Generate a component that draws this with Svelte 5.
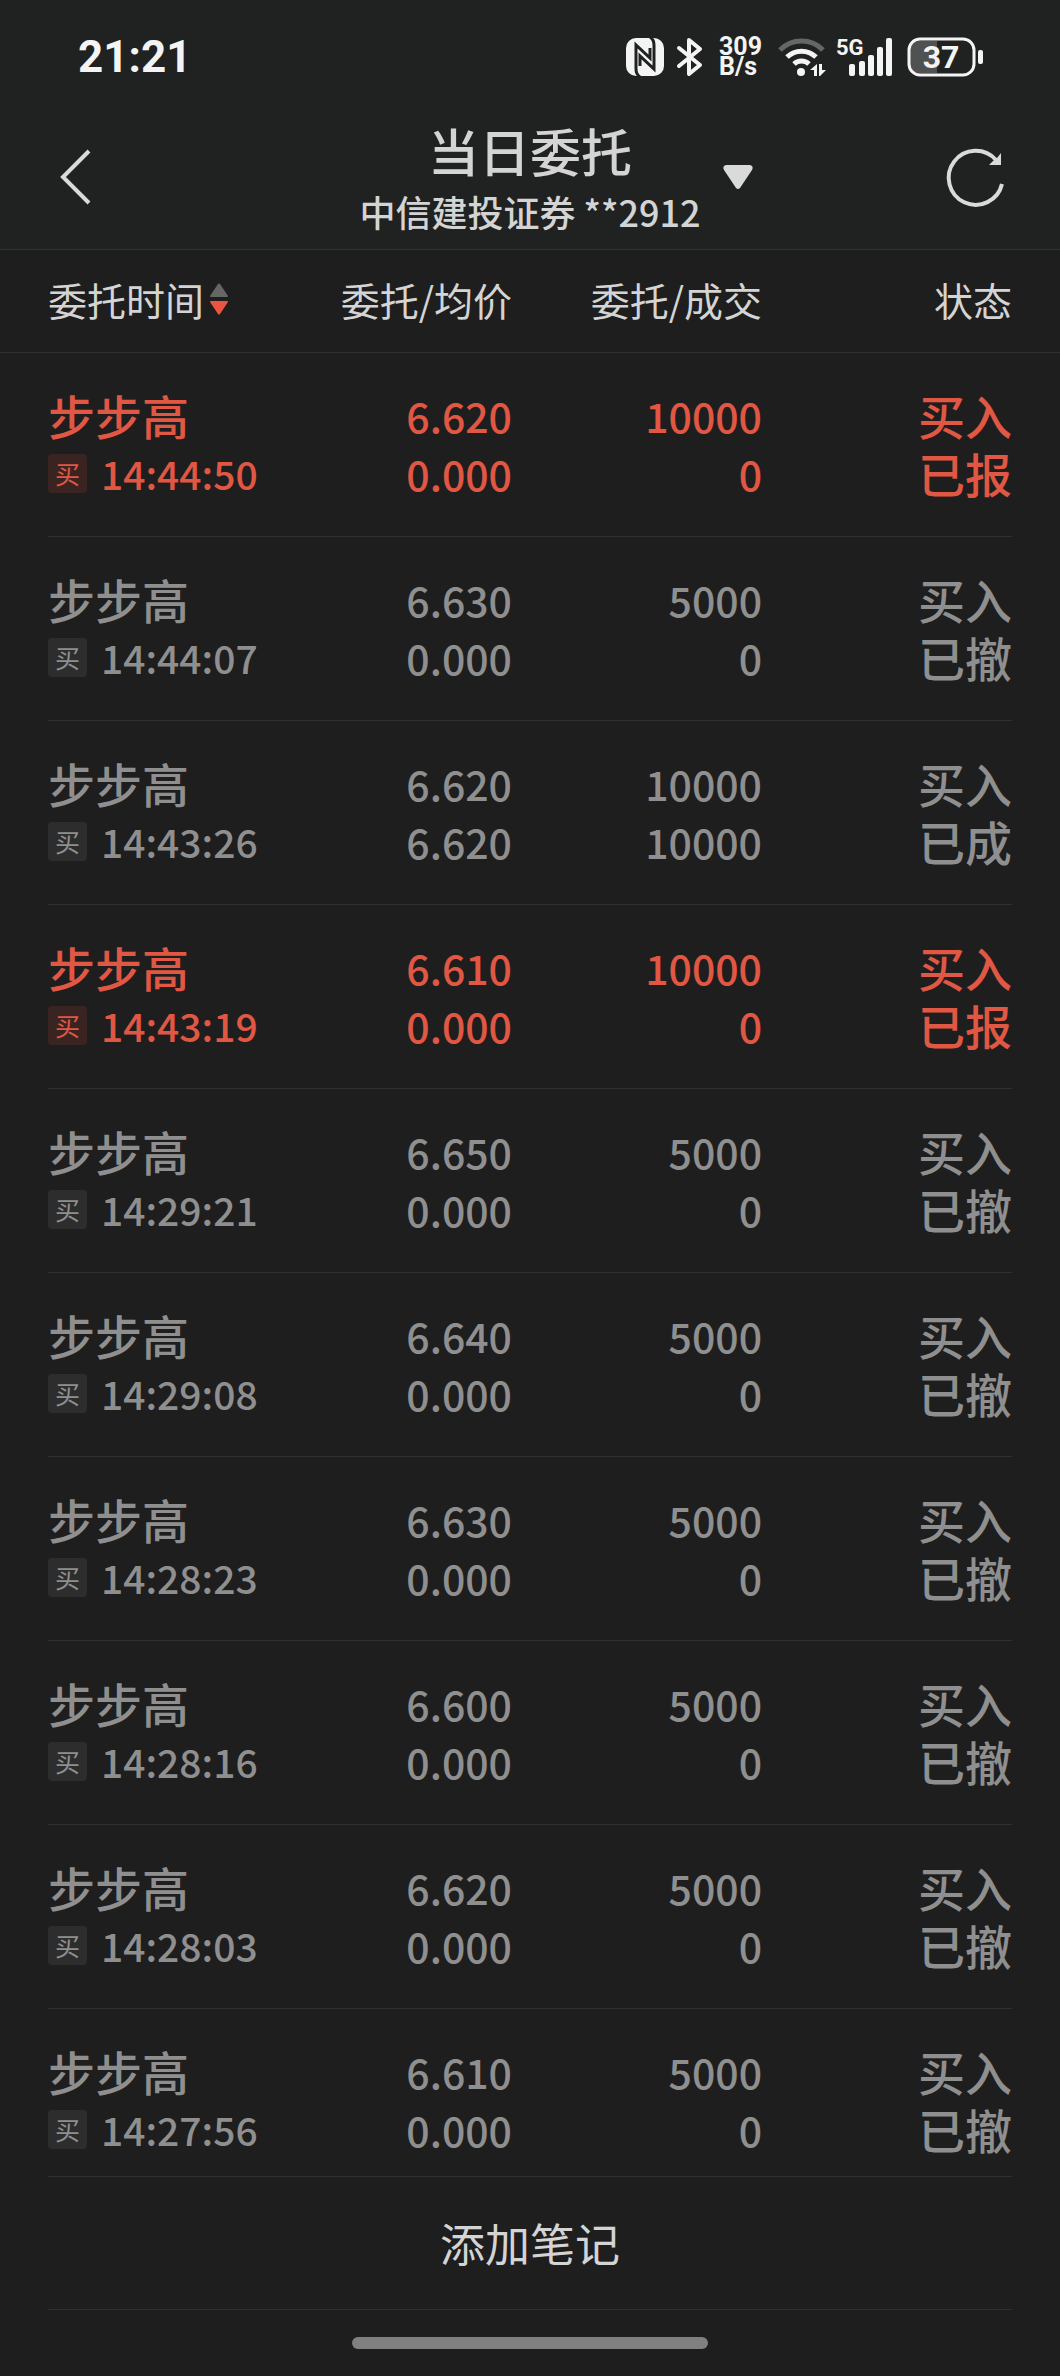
<script lang="ts">
    type Order = {
        name: string;
        time: string;
        price: string;
        avg: string;
        amount: number;
        dealt: number;
        status: string;
    };

    const orders: Order[] = [
        { name: '步步高', time: '14:44:50', price: '6.620', avg: '0.000', amount: 10000, dealt: 0, status: '已报' },
        { name: '步步高', time: '14:44:07', price: '6.630', avg: '0.000', amount: 5000, dealt: 0, status: '已撤' },
        { name: '步步高', time: '14:43:26', price: '6.620', avg: '6.620', amount: 10000, dealt: 10000, status: '已成' },
        { name: '步步高', time: '14:43:19', price: '6.610', avg: '0.000', amount: 10000, dealt: 0, status: '已报' },
        { name: '步步高', time: '14:29:21', price: '6.650', avg: '0.000', amount: 5000, dealt: 0, status: '已撤' },
        { name: '步步高', time: '14:29:08', price: '6.640', avg: '0.000', amount: 5000, dealt: 0, status: '已撤' },
        { name: '步步高', time: '14:28:23', price: '6.630', avg: '0.000', amount: 5000, dealt: 0, status: '已撤' },
        { name: '步步高', time: '14:28:16', price: '6.600', avg: '0.000', amount: 5000, dealt: 0, status: '已撤' },
        { name: '步步高', time: '14:28:03', price: '6.620', avg: '0.000', amount: 5000, dealt: 0, status: '已撤' },
        { name: '步步高', time: '14:27:56', price: '6.610', avg: '0.000', amount: 5000, dealt: 0, status: '已撤' },
    ];
</script>

<div class="screen">
    <header>
        <div class="status">
            <span class="clock">21:21</span>
            <div class="icons">
                <svg width="41" height="40" viewBox="0 0 41 40">
                    <rect y="1" width="38" height="38" rx="10" fill="#f4f4f4" />
                    <path fill="none" stroke="#202221" stroke-width="3" d="M14 40c-3-2-4-4-4-8V8l14 13V11M24 0c3 2 4 4 4 8v24L14 19v10" />
                </svg>
                <svg width="32" height="40" viewBox="0 0 32 40">
                    <path fill="none" stroke="#f4f4f4" stroke-width="4" stroke-linejoin="round" stroke-linecap="round" d="M2 11l21 17-11 9V3l11 9L2 29" />
                </svg>
                <span class="speed">309<br />B/s</span>
                <svg width="48" height="40" viewBox="0 0 48 40">
                    <g fill="none" stroke="#f4f4f4" stroke-width="5">
                        <path stroke="#666" d="M2 13a30 30 0 0 1 43 0" />
                        <path d="M9 20a21 21 0 0 1 29 0" />
                        <path d="M16 27a11 11 0 0 1 15 0" />
                    </g>
                    <circle cx="23" cy="35" r="4" fill="#f4f4f4" />
                    <path fill="#f4f4f4" d="M39 27v12h-3v-6h-4zM41 27h3v6h4l-6 6h-1z" />
                </svg>
                <svg width="61" height="40" viewBox="0 0 61 40">
                    <text x="0" y="18" class="net">5G</text>
                    <g fill="#f4f4f4">
                        <rect x="13" y="27" width="6" height="12" rx="2" />
                        <rect x="23" y="24" width="6" height="15" rx="2" />
                        <rect x="32" y="18" width="6" height="21" rx="2" />
                        <rect x="41" y="10" width="6" height="29" rx="2" />
                        <rect x="50" y="1" width="6" height="38" rx="2" />
                    </g>
                </svg>
                <svg width="76" height="40" viewBox="0 0 76 40">
                    <path fill="#505151" d="M12 4h18v32H12c-6 0-9-3-9-8V12c0-5 3-8 9-8z" />
                    <rect x="2" y="2" width="65" height="36" rx="11" fill="none" stroke="#f4f4f4" stroke-width="3" />
                    <rect x="71" y="13" width="5" height="14" rx="2" fill="#f4f4f4" />
                    <text x="34" y="31" text-anchor="middle" class="level">37</text>
                </svg>
            </div>
        </div>
        <nav>
            <button class="back" aria-label="返回">
                <svg width="36" height="56" viewBox="0 0 36 56">
                    <path fill="none" stroke="#dadada" stroke-width="4" d="M33 2L7 28l26 26" />
                </svg>
            </button>
            <div class="title">
                <h1>当日委托</h1>
                <p>中信建投证券 **2912</p>
            </div>
            <div class="actions">
                <button aria-label="切换账户">
                    <svg width="30" height="24" viewBox="0 0 30 24">
                        <path fill="#dadada" d="M3 0h24q4 1 2 5L17 23q-2 2-4 0L1 5q-2-4 2-5z" />
                    </svg>
                </button>
                <button aria-label="刷新">
                    <svg width="58" height="58" viewBox="0 0 58 58">
                        <path fill="none" stroke="#dadada" stroke-width="4" d="M56 36A27 27 0 1 1 50 12" />
                        <path fill="#dadada" d="M55 5v12H43l4-4 4-3z" />
                    </svg>
                </button>
            </div>
        </nav>
    </header>

    <table>
        <thead>
            <tr>
                <th>
                    <button class="sort">
                        委托时间
                        <svg width="18" height="32" viewBox="0 0 18 32">
                            <path fill="#666" d="M8 1q1-1 2 0l8 12q0 1-1 1H1q-1 0-1-1z" />
                            <path fill="#ea5440" d="M1 18h16q1 0 1 1l-8 12q-1 1-2 0L0 19q0-1 1-1z" />
                        </svg>
                    </button>
                </th>
                <th>委托/均价</th>
                <th>委托/成交</th>
                <th>状态</th>
            </tr>
        </thead>
        <tbody>
            {#each orders as order}
                <tr class:pending={order.status === '已报'}>
                    <td>
                        <div>{order.name}</div>
                        <div class="when">
                            <span class="tag">买</span>
                            <span class="time">{order.time}</span>
                        </div>
                    </td>
                    <td class="num">
                        <div>{order.price}</div>
                        <div>{order.avg}</div>
                    </td>
                    <td class="num">
                        <div>{order.amount}</div>
                        <div>{order.dealt}</div>
                    </td>
                    <td>
                        <div>买入</div>
                        <div>{order.status}</div>
                    </td>
                </tr>
            {/each}
        </tbody>
    </table>

    <footer>
        <button class="note">添加笔记</button>
        <div class="home"></div>
    </footer>
</div>

<style>
    :global(body){
        margin: 0;
        background-color: #1e1e1e;
    }

    .screen{
        height: 100vh;
        display: flex;
        flex-direction: column;
        background-color: #1e1e1e;
        color: #d4d4d4;
        font-family: "Noto Sans CJK SC", "Noto Sans", sans-serif;
    }

    button{
        padding: 0;
        border: none;
        background: none;
        color: inherit;
        font: inherit;
        cursor: pointer;
    }

    svg{
        display: block;
        overflow: visible;
    }

    header{
        background-color: #202221;
        border-bottom: 1px solid #313433;
    }

    /* system status bar */
    .status{
        height: 114px;
        padding: 0 77px 0 78px;
        display: flex;
        align-items: center;
        justify-content: space-between;
        color: #f4f4f4;
        font-family: Roboto, "Noto Sans", sans-serif;
        font-weight: 700;
    }

    .clock{
        font-size: 44px;
    }

    .icons{
        display: flex;
        align-items: center;
        gap: 10px;
    }

    .speed{
        width: 49px;
        font-size: 25px;
        line-height: 20px;
    }

    .net{
        fill: #f4f4f4;
        font-size: 22px;
    }

    .level{
        fill: #f4f4f4;
        font-size: 32px;
    }

    /* title bar */
    nav{
        display: grid;
        grid-template-columns: 1fr auto 1fr;
        align-items: center;
        padding: 0 56px 10px;
        height: 125px;
    }

    .back{
        justify-self: start;
    }

    .title{
        text-align: center;
    }

    h1{
        margin: 0;
        font-size: 51px;
        font-weight: 500;
        line-height: 68px;
    }

    .title p{
        margin: 0;
        font-size: 36px;
        font-weight: 500;
        line-height: 54px;
    }

    .actions{
        display: flex;
        align-items: center;
        justify-content: space-between;
        padding-left: 22px;
    }

    /* order list */
    table{
        flex: 1;
        min-height: 0;
        display: flex;
        flex-direction: column;
    }

    thead{
        display: block;
        border-bottom: 1px solid #2f3130;
    }

    tbody{
        display: block;
        flex: 1;
        min-height: 0;
        overflow-y: auto;
        scrollbar-width: none;
    }

    tr{
        display: grid;
        grid-template-columns: 214fr 250fr 250fr 250fr;
        margin: 0 48px;
    }

    thead tr{
        padding: 20px 0 24px;
    }

    tbody tr{
        padding: 33px 0 34px;
        border-bottom: 1px solid #2f3030;
        color: #8f8f8f;
    }

    th, td{
        padding: 0;
        text-align: right;
        line-height: 58px;
        white-space: nowrap;
    }

    th:first-child, td:first-child{
        text-align: left;
    }

    th{
        font-size: 39px;
        font-weight: 400;
    }

    td{
        font-size: 47px;
        font-weight: 500;
    }

    .num{
        font-size: 41px;
    }

    .sort{
        display: flex;
        align-items: center;
        gap: 6px;
    }

    .when{
        display: flex;
        align-items: center;
        gap: 14px;
    }

    .tag{
        width: 39px;
        border-radius: 4px;
        background-color: #2d2d2d;
        font-size: 25px;
        font-weight: 400;
        line-height: 39px;
        text-align: center;
    }

    .time{
        font-size: 39px;
    }

    tbody .pending{
        color: #e05744;
    }

    .pending .tag{
        background-color: #3a2422;
    }

    /* bottom bar */
    footer{
        padding: 0 48px;
    }

    .note{
        width: 100%;
        border-top: 1px solid #2f3030;
        border-bottom: 1px solid #2f3030;
        font-size: 45px;
        line-height: 132px;
    }

    .home{
        width: 37%;
        height: 12px;
        margin: 27px auto;
        border-radius: 6px;
        background-color: #808080;
    }
</style>
